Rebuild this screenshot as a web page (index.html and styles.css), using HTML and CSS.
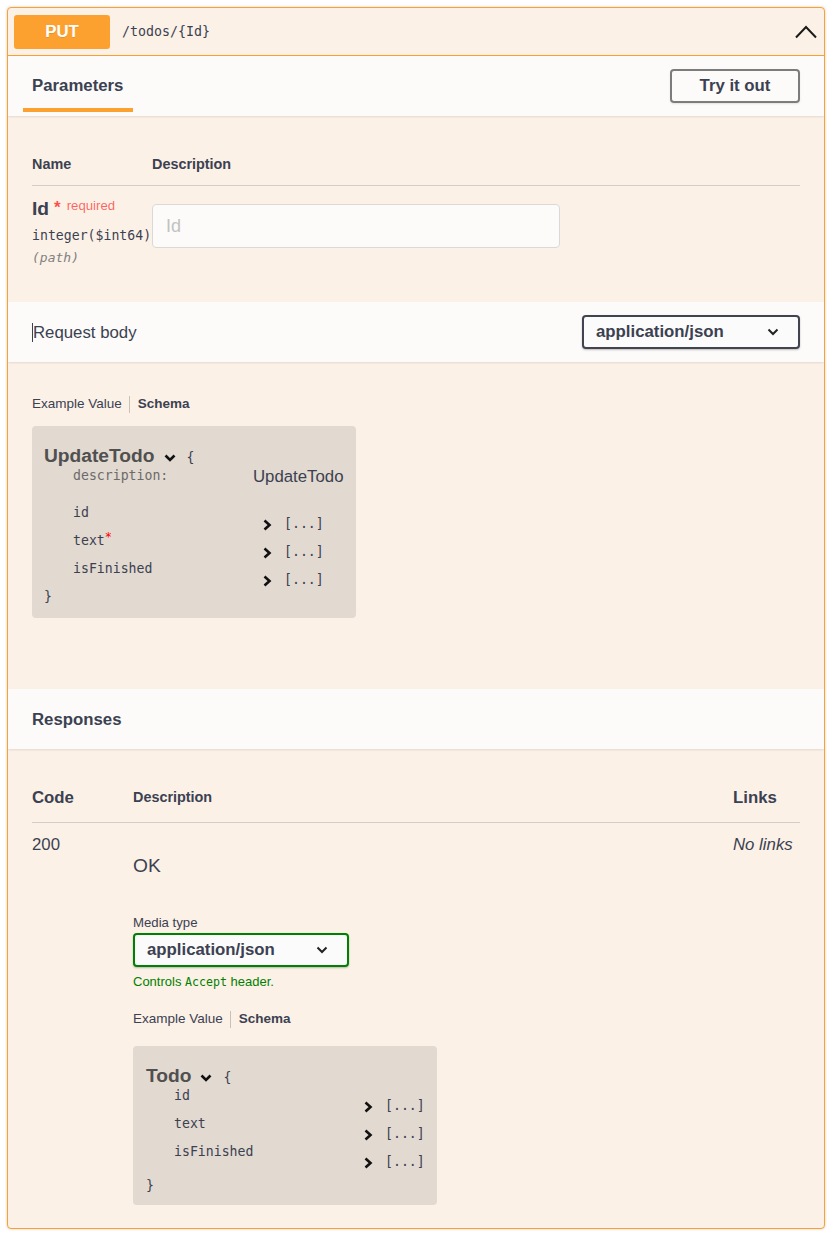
FILE: index.html
```html
<!DOCTYPE html>
<html lang="en">
<head>
<meta charset="utf-8">
<title>PUT /todos/{Id}</title>
<link rel="stylesheet" href="styles.css">
</head>
<body>
<div class="opblock">
  <div class="summary">
    <span class="method">PUT</span>
    <span class="path">/todos/{Id}</span>
    <svg class="collapse-icon" width="22" height="14" viewBox="0 0 22 14"><polyline points="1,12.5 11,2 21,12.5" fill="none" stroke="#1b1b1b" stroke-width="2"/></svg>
  </div>

  <div class="section-header">
    <div class="tab-header">
      <h4 class="tab-title">Parameters</h4>
      <span class="tab-bar"></span>
    </div>
    <button class="try-out">Try it out</button>
  </div>

  <div class="params-body">
    <div class="params-head">
      <div class="col-name">Name</div>
      <div class="col-desc">Description</div>
    </div>
    <div class="params-row">
      <div class="col-name">
        <div class="param-name"><span class="pname">Id</span><span class="star">*</span><span class="required">required</span></div>
        <div class="param-type">integer($int64)</div>
        <div class="param-in">(path)</div>
      </div>
      <div class="col-desc">
        <input class="param-input" type="text" placeholder="Id">
      </div>
    </div>
  </div>

  <div class="section-header centered">
    <div class="rb-title"><span class="caret"></span>Request body</div>
    <div class="select">
      <span>application/json</span>
      <svg width="12" height="8" viewBox="0 0 12 8"><polyline points="1.5,1.5 6,6 10.5,1.5" fill="none" stroke="#222" stroke-width="2"/></svg>
    </div>
  </div>

  <div class="rb-body">
    <div class="tabs">
      <span class="tab">Example Value</span><span class="tab-sep"></span><span class="tab active">Schema</span>
    </div>
    <div class="model-box model-update">
      <div class="model-title-line">
        <span class="model-title">UpdateTodo</span>
        <svg class="toggle" width="12" height="8" viewBox="0 0 12 8"><polyline points="1.5,1.5 6,6 10.5,1.5" fill="none" stroke="#111" stroke-width="2.6"/></svg>
        <span class="brace">{</span>
      </div>
      <div class="mrow mrow-desc"><span class="mname muted">description:</span><span class="mval-text">UpdateTodo</span></div>
      <div class="mrow"><span class="mname">id</span><span class="mval"><svg width="9" height="12" viewBox="0 0 9 12"><polyline points="1.5,1.5 6.5,6 1.5,10.5" fill="none" stroke="#111" stroke-width="2.6"/></svg><span class="bracket">[...]</span></span></div>
      <div class="mrow"><span class="mname">text<span class="req-star">*</span></span><span class="mval"><svg width="9" height="12" viewBox="0 0 9 12"><polyline points="1.5,1.5 6.5,6 1.5,10.5" fill="none" stroke="#111" stroke-width="2.6"/></svg><span class="bracket">[...]</span></span></div>
      <div class="mrow"><span class="mname">isFinished</span><span class="mval"><svg width="9" height="12" viewBox="0 0 9 12"><polyline points="1.5,1.5 6.5,6 1.5,10.5" fill="none" stroke="#111" stroke-width="2.6"/></svg><span class="bracket">[...]</span></span></div>
      <div class="brace close">}</div>
    </div>
  </div>

  <div class="section-header centered">
    <h4 class="resp-title">Responses</h4>
  </div>

  <div class="resp-body">
    <div class="resp-head">
      <div class="rc-code">Code</div>
      <div class="rc-desc">Description</div>
      <div class="rc-links">Links</div>
    </div>
    <div class="resp-row">
      <div class="rc-code code-val">200</div>
      <div class="rc-desc">
        <div class="resp-ok">OK</div>
        <div class="media-label">Media type</div>
        <div class="select green">
          <span>application/json</span>
          <svg width="12" height="8" viewBox="0 0 12 8"><polyline points="1.5,1.5 6,6 10.5,1.5" fill="none" stroke="#222" stroke-width="2"/></svg>
        </div>
        <div class="controls">Controls <code>Accept</code> header.</div>
        <div class="tabs resp-tabs">
          <span class="tab">Example Value</span><span class="tab-sep"></span><span class="tab active">Schema</span>
        </div>
        <div class="model-box model-todo">
          <div class="model-title-line">
            <span class="model-title">Todo</span>
            <svg class="toggle" width="12" height="8" viewBox="0 0 12 8"><polyline points="1.5,1.5 6,6 10.5,1.5" fill="none" stroke="#111" stroke-width="2.6"/></svg>
            <span class="brace">{</span>
          </div>
          <div class="mrow"><span class="mname">id</span><span class="mval"><svg width="9" height="12" viewBox="0 0 9 12"><polyline points="1.5,1.5 6.5,6 1.5,10.5" fill="none" stroke="#111" stroke-width="2.6"/></svg><span class="bracket">[...]</span></span></div>
          <div class="mrow"><span class="mname">text</span><span class="mval"><svg width="9" height="12" viewBox="0 0 9 12"><polyline points="1.5,1.5 6.5,6 1.5,10.5" fill="none" stroke="#111" stroke-width="2.6"/></svg><span class="bracket">[...]</span></span></div>
          <div class="mrow"><span class="mname">isFinished</span><span class="mval"><svg width="9" height="12" viewBox="0 0 9 12"><polyline points="1.5,1.5 6.5,6 1.5,10.5" fill="none" stroke="#111" stroke-width="2.6"/></svg><span class="bracket">[...]</span></span></div>
          <div class="brace close">}</div>
        </div>
      </div>
      <div class="rc-links"><span class="no-links">No links</span></div>
    </div>
  </div>
</div>
</body>
</html>
```

FILE: styles.css
```css
* { box-sizing: border-box; }

body {
  margin: 0;
  padding: 7px 10px 7px 7px;
  background: #fff;
  font-family: "Liberation Sans", Arial, sans-serif;
  color: #3b4151;
}

.opblock {
  border: 1px solid #fca130;
  border-radius: 4px;
  background: #fcf1e7;
  box-shadow: 0 0 3px rgba(0, 0, 0, .19);
  overflow: hidden;
}

/* summary */
.summary {
  height: 48px;
  display: flex;
  align-items: center;
  padding: 0 7px 0 6px;
  border-bottom: 1px solid #fca130;
}
.method {
  width: 96px;
  height: 34px;
  border-radius: 3px;
  background: #fca130;
  color: #fff;
  font-weight: 700;
  font-size: 16.8px;
  display: flex;
  align-items: center;
  justify-content: center;
  text-shadow: 0 1px 0 rgba(0, 0, 0, .1);
}
.path {
  margin-left: 12px;
  font-family: "DejaVu Sans Mono", monospace;
  font-size: 13.3px;
  color: #3b4151;
}
.collapse-icon { margin-left: auto; display: block; }

/* section headers */
.section-header {
  position: relative;
  z-index: 1;
  height: 60px;
  display: flex;
  align-items: flex-start;
  justify-content: space-between;
  padding: 0 24px;
  background: #fcfbf9;
  box-shadow: 0 1px 2px rgba(0, 0, 0, .1);
}
.section-header.centered { align-items: center; }

.tab-header {
  display: flex;
  flex-direction: column;
  align-items: flex-start;
  padding-top: 20px;
}
.tab-title {
  margin: 0;
  font-size: 16.8px;
  font-weight: 700;
  line-height: 19px;
}
.tab-bar {
  display: block;
  width: 110px;
  height: 4px;
  margin: 13px 0 0 -9px;
  background: #fca130;
}
.try-out {
  align-self: center;
  width: 130px;
  height: 34px;
  padding: 0;
  border: 2px solid #7c7c7c;
  border-radius: 4px;
  background: transparent;
  font: 700 16.8px "Liberation Sans", Arial, sans-serif;
  color: #3b4151;
  box-shadow: 0 1px 2px rgba(0, 0, 0, .1);
}

/* parameters */
.params-body { padding: 28px 24px 25px; }
.params-head {
  display: flex;
  padding: 12px 0;
  border-bottom: 1px solid rgba(59, 65, 81, .2);
  font-size: 14.4px;
  font-weight: 700;
  line-height: 17px;
}
.col-name { width: 120px; flex: none; }
.col-desc { flex: 1; }
.params-row { display: flex; padding: 11px 0 10px; }
.param-name { display: flex; align-items: flex-start; height: 24px; }
.pname { font-size: 19.2px; font-weight: 700; line-height: 24px; }
.star {
  color: rgba(255, 0, 0, .7);
  font-size: 17px;
  font-weight: 700;
  line-height: 17px;
  margin: 2px 0 0 5px;
}
.required {
  color: rgba(255, 0, 0, .6);
  font-size: 13.2px;
  line-height: 14px;
  margin: 2px 0 0 6px;
}
.param-type {
  font-family: "DejaVu Sans Mono", monospace;
  font-size: 13.2px;
  line-height: 15px;
  padding: 7px 0 5px;
}
.param-in {
  font-family: "DejaVu Sans Mono", monospace;
  font-style: italic;
  font-size: 13px;
  line-height: 19px;
  color: #808080;
}
.param-input {
  display: block;
  margin-top: 7px;
  width: 408px;
  height: 44px;
  padding: 8px 13px;
  border: 1px solid #d9d9d9;
  border-radius: 4px;
  background: #fcfbfa;
  font: 18px "Liberation Sans", Arial, sans-serif;
  color: #3b4151;
  outline: none;
}
.param-input::placeholder { color: #c2c2c2; }

/* request body */
.rb-title {
  display: flex;
  align-items: center;
  font-size: 16.8px;
  line-height: 19px;
}
.caret {
  display: inline-block;
  width: 1px;
  height: 19px;
  background: #3b4151;
}
.select {
  width: 218px;
  height: 34px;
  display: flex;
  align-items: center;
  justify-content: space-between;
  padding: 0 19px 0 12px;
  border: 2px solid #41444e;
  border-radius: 4px;
  background: #fbfbfb;
  box-shadow: 0 1px 2px 0 rgba(0, 0, 0, .25);
  font-size: 16.8px;
  font-weight: 700;
  color: #3b4151;
}
.select svg { display: block; }
.select.green {
  width: 216px;
  border-color: #008000;
  margin-top: 2px;
}

.rb-body { padding: 33px 24px 71px; }

.tabs {
  display: flex;
  align-items: center;
  font-size: 13.5px;
  line-height: 18px;
  height: 18px;
}
.tab-sep {
  width: 1px;
  height: 17px;
  margin: 0 8px 0 7px;
  background: rgba(0, 0, 0, .2);
}
.tab.active { font-weight: 700; }

/* model boxes */
.model-box {
  width: fit-content;
  margin-top: 13px;
  padding: 18px 12px 13px;
  border-radius: 4px;
  background: #e2d9d0;
  font-family: "DejaVu Sans Mono", monospace;
  font-size: 13.2px;
  color: #3b4151;
}
.model-title-line {
  display: flex;
  align-items: center;
  height: 24px;
}
.model-title {
  font-family: "Liberation Sans", Arial, sans-serif;
  font-size: 19.2px;
  font-weight: 700;
  line-height: 24px;
  color: #505050;
}
.toggle { display: block; margin: 3px 0 0 9px; }
.brace { line-height: 16px; margin: 4px 0 0 11px; }
.brace.close { margin: 0; }

.mrow {
  display: grid;
  grid-template-columns: 209px auto;
  height: 28px;
}
.mname { padding-left: 29px; line-height: 16px; }
.mname.muted { color: #6b6b6b; }
.req-star {
  color: #f00;
  font-size: 12px;
  line-height: 0;
  vertical-align: 4px;
}
.mval {
  display: flex;
  align-items: center;
  margin-top: 11px;
  height: 16px;
  padding-left: 10px;
}
.mval svg { display: block; margin-top: 1px; }
.bracket { margin-left: 12px; line-height: 16px; }
.mrow-desc { height: 37px; }
.mval-text {
  font-family: "Liberation Sans", Arial, sans-serif;
  font-size: 16.8px;
  line-height: 20px;
  margin-top: -1px;
}

.model-todo { margin-top: 18px; padding: 18px 12px 11px 13px; }
.model-todo .mrow { grid-template-columns: 218px auto; }
.model-todo .mname { padding-left: 28px; }
.model-todo .mval { padding-left: 0; margin-top: 10px; }
.model-todo .brace.close { margin-top: 6px; }

/* responses */
.resp-title {
  margin: 0;
  font-size: 16.8px;
  font-weight: 700;
  line-height: 19px;
}
.resp-body { padding: 27px 24px 23px; }
.resp-head {
  display: flex;
  align-items: center;
  padding: 12px 0 15px;
  border-bottom: 1px solid rgba(59, 65, 81, .2);
  line-height: 19px;
  font-weight: 700;
}
.rc-code { width: 101px; flex: none; }
.rc-desc { flex: 1; }
.rc-links { width: 67px; flex: none; }
.resp-head .rc-code,
.resp-head .rc-links { font-size: 16.8px; }
.resp-head .rc-desc { font-size: 14.4px; }

.resp-row { display: flex; align-items: flex-start; }
.code-val,
.resp-row .rc-links {
  padding-top: 12px;
  font-size: 16.8px;
  line-height: 19px;
}
.no-links { font-style: italic; }
.resp-ok {
  margin-top: 32px;
  font-size: 19.2px;
  line-height: 22px;
}
.media-label {
  margin-top: 38px;
  font-size: 13.2px;
  line-height: 16px;
}
.controls {
  margin-top: 7px;
  font-size: 13px;
  line-height: 16px;
  color: #008000;
}
.controls code {
  font-family: "DejaVu Sans Mono", monospace;
  font-size: 11.6px;
}
.resp-tabs { margin-top: 20px; }
```
